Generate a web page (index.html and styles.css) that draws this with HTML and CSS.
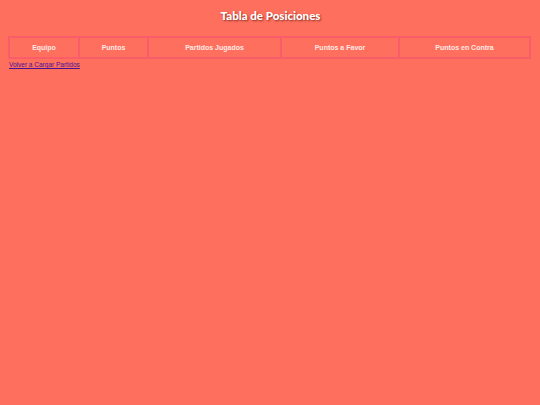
FILE: index.html
```html
<!DOCTYPE html>
<html lang="es">
<head>
<meta charset="utf-8">
<title>Tabla de Posiciones</title>
<link rel="stylesheet" href="styles.css">
</head>
<body>
<h1 class="title">Tabla de Posiciones</h1>
<table class="standings">
  <thead>
    <tr>
      <th class="col-team">Equipo</th>
      <th class="col-points">Puntos</th>
      <th class="col-played">Partidos Jugados</th>
      <th class="col-for">Puntos a Favor</th>
      <th class="col-against">Puntos en Contra</th>
    </tr>
  </thead>
  <tbody></tbody>
</table>
<a class="reload" href="#">Volver a Cargar Partidos</a>
</body>
</html>
```
FILE: styles.css
```css
html, body {
  height: 100%;
}
body {
  margin: 0;
  padding: 0 8px 0 9px;
  background: #ff6f5e;
  font-family: "Liberation Sans", Arial, sans-serif;
}
.title {
  margin: 0;
  padding: 9px 0 0;
  height: 28px;
  box-sizing: border-box;
  text-align: center;
  font-family: Lato, "Open Sans", sans-serif;
  font-weight: 900;
  font-size: 11.5px;
  color: #fff;
  text-shadow: 1px 1px 2px rgba(80, 15, 5, 0.7);
}
.standings {
  width: 523px;
  border-collapse: separate;
  border-spacing: 0;
  border: 1px solid #fa5d6a;
  margin: 8px 0 0 -1px;
}
.standings th {
  border: 1px solid #fa5d6a;
  height: 19px;
  padding: 0;
  font-size: 7px;
  font-weight: bold;
  color: #ffe9e4;
}
.col-team { width: 68px; }
.col-points { width: 67px; }
.col-played { width: 131px; }
.col-for { width: 116px; }
.col-against { width: auto; }
.reload {
  display: block;
  width: max-content;
  margin-top: 1px;
  font-size: 6.5px;
  color: #4b1296;
  line-height: 9px;
}
```
